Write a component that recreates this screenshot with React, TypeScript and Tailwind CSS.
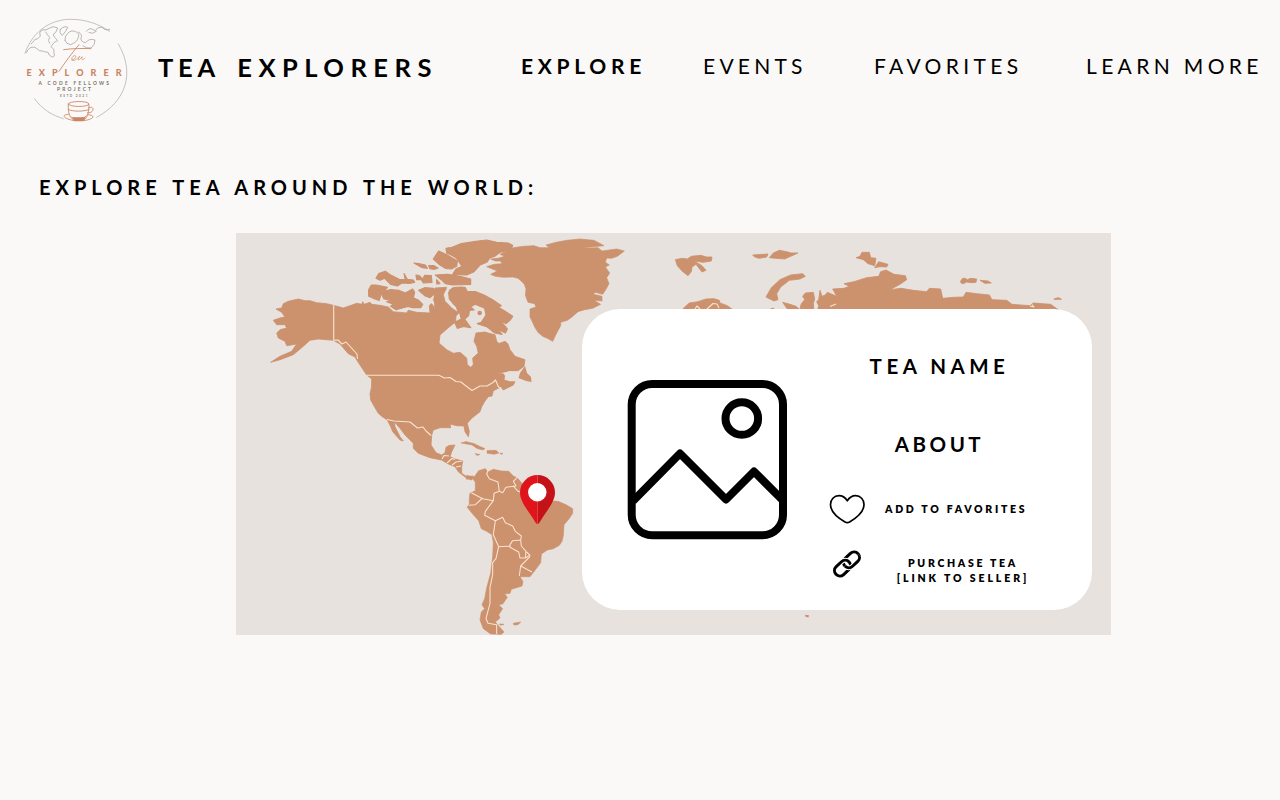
import type { ReactNode } from 'react';

const LAND = '#cc916d';
const BORDER = '#fae3d0';

function Logo() {
  return (
    <svg viewBox="15 10 125 120" className="h-[120px] w-[125px]" fill="none">
      <g transform="translate(15 10) scale(.33333)" strokeLinecap="round" strokeLinejoin="round">
        <g stroke="#aaa49e" strokeWidth="2">
          <path d="M30 130C55 55 118 27 168 28C215 28 255 44 284 64" />
          <path d="M310 102C362 190 332 275 245 322M58 266C82 298 110 315 145 326" />
          <path
            d="M34 128Q42 108 60 112Q74 126 86 124Q92 128 98 126Q102 138 112 141Q120 142 117 128Q120 116 108 110Q116 94 128 92Q118 82 114 74Q126 66 128 54Q114 46 104 54Q94 62 80 60Q70 68 76 78Q68 90 60 88Q54 98 48 102M92 66Q98 76 104 82Q96 92 104 100M136 58Q148 46 158 52Q152 66 142 76Q132 70 136 58M150 92Q148 80 158 70Q170 58 184 66Q196 72 190 82Q186 98 166 104Q154 102 150 92M190 66Q204 74 198 84Q196 96 212 98Q222 84 240 90Q240 106 228 114Q214 116 204 108M214 64Q224 50 236 60Q240 66 248 54Q262 48 268 58Q276 62 284 58M222 68Q232 74 244 64"
            strokeWidth="2.4"
          />
        </g>
        <g stroke="#c98462" strokeWidth="2.6">
          <path d="M146 119C170 115 206 115 228 116M192 104C170 130 148 160 132 184" />
          <path d="M170 150C180 150 188 136 178 137C169 140 167 154 178 151C186 148 194 137 195 139C188 146 188 154 194 148L202 140C198 150 202 152 210 144" strokeWidth="2" />
          <path d="M160 282C160 272 220 272 222 282C220 292 162 292 160 282ZM160 284C158 310 166 327 178 330H206C218 324 222 304 222 284M222 293C242 286 236 312 218 308M160 299C176 305 204 305 222 299M160 313C138 314 144 326 178 332H206C236 328 244 316 220 314M170 322C184 330 204 328 214 318" />
          <path d="M174 323H210L204 332H180Z" fill="#c98462" />
        </g>
      </g>
      <g fontFamily="Lato, sans-serif">
        <text x="26.5" y="76" fontSize="9" fontWeight="900" fill="#c98462" textLength="95">EXPLORER</text>
        <text x="38.5" y="84.8" fontSize="4.8" fontWeight="700" fill="#77716c" textLength="70.5">A CODE FELLOWS</text>
        <text x="57" y="91.4" fontSize="4.8" fontWeight="700" fill="#77716c" textLength="34">PROJECT</text>
        <text x="60" y="97.4" fontSize="3.2" fontWeight="700" fill="#8c8580" textLength="27.5">ESTD 2021</text>
      </g>
    </svg>
  );
}

function WorldMap() {
  return (
    <svg viewBox="236 233 875 402" className="block h-[402px] w-[875px] bg-[#e7e2de]" fill={LAND}>
      {/* North and Central America */}
      <path
        stroke={LAND}
        strokeWidth=".8"
        strokeLinejoin="round"
        d="M276 309L281.700 308L283.300 303.700L288.300 301.300L298.300 299L305 300.700H310L316.700 302.700L326.700 303.700L333.300 305.300L343.300 308L350 305.700L356.700 303.300L361.700 304.300L362.700 301.700L364.300 304.300L370 302.300L371.700 304.300L380 305.300L388.300 307L393.300 311.700L406.700 313L408.300 310.300L416.700 312.300L430 313L429.300 305.700L431.300 303.500L433.300 305.700L436 312.300L439 310.300L433.300 299.700L436 294L435 288L446.700 287.300L443.300 294.700L445 301.300L451.700 308L457.700 312.300L456 305L459 306L463 302.500L461 299.500L451 293L449 290.500L453 287.600L458 290.500L460 296L474.500 310L460 311.700L456 316L455.500 322L448 328L440 335L439 343L446.700 349.700L453.300 353.300L460 352.300L466.700 358L467.300 364.700L470.700 367.300L473.300 364.700L472.700 358L478.300 353L476.700 346.300L474 341.300L476 333L485 332L488 333L495 334.700L496.700 341.300L499 343.500L505 341.300L508 344L510 349.700L515 356.300L525 359.700L524 366.300L518.300 370.700L503.300 372.300L496.700 373.300L505 374L504 380L510 381.700L515 381.700L513.300 385L503.300 390L501 387L493.300 390.700L492 396L488.300 396.700L485 401L481.700 406.700L480 411.700L471.700 418.300L467.300 423.300L469.300 431.700L468.300 436.700L465 431.700L464 426L456.700 425.700L450 424L450.700 427.700L440 427.700L433.300 430L431.700 435L431 445L436 452.700L441.700 455L445 452.700L446 447.300L449 445.500L455 445L451.700 451.700L450 456.700L455 459L462.700 461L461.700 466.700V473.300L466.700 476.700L473.300 476L471.700 480L466.700 478.300L458.300 471.700L455 466.700L448.300 464L441.700 460L430 457.700L418.300 453.300L413.300 448.300V443.300L405 435L400 428.300L394.300 421.700L395 426.700L400 436.700L403.300 441L400 440L392.700 431.700L390.700 426.700L387.300 420L382 416.500L378.300 413.300L374 406L370.700 400L370 394L371.500 387L371.700 379L366.700 375L363.300 370L356.700 360L355 357L348.300 353.700L340 344L333.300 340.300L318.300 339L310 340.300L303.300 346.300L293.300 354.700L280 359.700L270.700 362.300L280 356.300L291.700 351.300L296.700 344L286.700 345.700L285 341.300L278.300 338L276.700 333L280 329.700L286.700 328L285 324.700H276.700L273.300 320.300L280 318L285 317L281.700 312.300Z"
      />
      <path fill="#e7e2de" d="M503 373L510 371L518 371.500L522 369L520 374L516 379L507 378Z" />
      {/* Newfoundland, Cuba, Hispaniola, Jamaica, Puerto Rico */}
      <path d="M525 366L527 373L531 377L531.500 382L526 381L518.500 378L520 373Z" />
      <path
        stroke={LAND}
        strokeWidth=".5"
        d="M461 443L466 441.600L474 443.500L480 446.500L485 448.500L483 450L477 448.500L472 445ZM487 450.500L496 450.300L499 453L494 454.300L487 453.300ZM475 453.500L480 454.500L477 455.500ZM500 453L503 453.500L501 454.500Z"
      />
      {/* Arctic islands */}
      <g transform="translate(360 235) scale(.33333)" stroke={LAND} strokeWidth="3.500" strokeLinejoin="round">
        <path d="M48 130L56 116L76 109L88 118L104 126L120 134L136 134L132 116L142 133L160 135L164 142L148 145L126 144L112 153L92 148L74 130L60 136Z" />
        <path d="M26 164L34 150L48 150L68 154L82 157L72 170L62 180L58 196L40 190L26 184Z" />
        <path d="M66 180L74 168L92 164L116 166L136 174L158 162L164 172L160 188L176 196L188 208L182 218L158 218L144 214L130 218L108 224L92 214L100 208L80 200L98 196L72 192Z" />
        <path d="M162 84L176 86L196 90L202 100L184 97ZM206 92L222 92L234 99L224 103L210 101ZM168 120L178 122L188 132L194 121L214 122L216 142L190 144L184 134L170 134ZM226 120L262 118L300 124L332 132L332 148L278 150L256 146L244 134ZM230 134L240 146L230 147Z" />
        <path d="M220 72L236 48L262 60L292 78L290 94L274 102L256 100L240 90Z" />
        <path d="M258 40L276 37L304 26L348 19L380 15L410 22L444 24L458 31L454 42L420 52L404 64L390 68L380 82L360 90L342 110L320 120L278 118L288 102L306 94L298 82L290 70L278 62L260 54Z" />
        <path d="M176 166L194 158L220 160L224 176L210 188L194 182Z" />
        <path d="M266 172L282 158L304 156L316 158L322 170L346 170L372 180L398 194L424 212L414 216L434 228L458 244L450 256L438 266L420 256L442 282L436 294L414 282L426 298L404 294L382 276L352 266L364 262L378 240L374 220L346 208L330 216L326 242L314 252L332 278L310 274L292 280L284 262L304 252L296 222L278 204L268 192Z" />
        <path d="M354 234A5 5 0 1 0 364 234A5 5 0 1 0 354 234Z" />
        <path d="M222 162H258L240 184L240 206L264 224L288 234L284 250L252 238L226 240Z" />
      </g>
      {/* Greenland */}
      <g transform="translate(440 233) scale(.33333)" stroke={LAND} strokeWidth="2" strokeLinejoin="round">
        <path d="M140 101L162 94L186 92L182 84L166 84L152 78L174 76L194 70L180 64L204 52L220 44L250 40L282 38L300 44L328 44L318 36L348 28L380 22L420 18L462 22L492 38L450 42L422 46L474 44L486 54L530 48L553 54L532 70L515 76L500 75L496 88L508 96L496 102L509 120L500 134L507 152L496 172L488 184L466 178L460 184L486 190L486 204L462 202L482 214L458 226L434 230L414 236L396 252L382 262L362 268L362 278L350 300L338 325L322 316L308 310L294 298L284 282L276 264L270 252L270 228L288 222L284 212L264 208L258 192L278 192L286 196L256 190L258 168L253 154L246 146L234 136L218 132L190 133L166 130L152 124L172 114Z" />
      </g>
      {/* South America */}
      <g transform="translate(430 460) scale(.33333)" stroke={LAND} strokeWidth="2" strokeLinejoin="round">
        <path d="M110 46L132 52L146 32L166 26L174 36L190 28L214 33L236 34L250 48L262 54L276 70L300 110L350 122L384 124L408 134L428 146L428 160L416 178L402 194L400 226L396 244L388 256L370 266L352 270L334 282L332 308L314 332L300 350L270 350L279 365L276 378L244 388L240 400L224 402L232 412L218 432L206 434L218 446L206 464L210 474L196 486L206 498L222 516L214 523L182 522L160 506L150 480L154 456L164 446L156 434L164 416L170 384L182 340L188 290L190 248L186 224L170 214L154 206L146 182L128 162L112 142L118 132L118 116L120 100L136 92L136 66L126 54L110 58Z" />
        <path d="M250 490L260 488L272 486L264 494L252 495ZM208 492L222 493L212 496Z" />
      </g>
      {/* Svalbard, Russia and the Arctic coast */}
      <g transform="translate(660 233) scale(.33333)" stroke={LAND} strokeWidth="2.500" strokeLinejoin="round">
        <path d="M46 80L66 76L82 78L94 70L122 67L140 72L156 72L154 84L130 88L102 84L126 98L138 112L126 117L108 94L96 102L94 116L84 128L66 114L52 98ZM278 66L324 63L320 72L298 76L284 72ZM328 74L340 60L358 52L380 56L394 60L414 60L396 68L374 78L346 76ZM588 74L600 70L606 58L628 58L632 74L648 76L644 98L624 92L610 80ZM644 104L656 86L684 94L680 102L660 101Z" />
        <path d="M318 192L334 164L360 140L392 126L428 122L436 130L420 138L388 142L362 162L350 182L354 200L342 204ZM70 226L88 210L114 206L138 198L162 197L178 202L180 210L202 218L224 234H70ZM332 228L340 225L342 228ZM368 208L390 214L408 220L424 234H386ZM420 226L424 212L434 200L428 190L436 180L460 178L464 198L460 212L462 234H430Z" />
        <path d="M472 234L476 218L470 206L476 200L480 172L486 190L496 186L502 178L530 190L518 168L552 166L568 160L552 152L582 146L620 134L656 130L662 116L678 111L702 124L736 128L740 140L720 154L690 170L724 166L760 172L800 176L808 166L842 168L848 196L880 193L910 192L918 178L950 182L988 186L996 200L1040 202L1056 214L1110 218L1120 210L1172 214L1200 234Z" />
        <path d="M902 144L908 136L916 136L922 140L932 136L950 138L948 148L934 149L920 147L910 152L903 150ZM960 142L984 144L994 150L974 151ZM1182 198L1194 194L1204 198V199H1182Z" />
      </g>
      <path d="M805 614.800L809 615.200L808.500 617.600L805.500 616.800Z" />

      {/* National borders */}
      <g fill="none" stroke={BORDER} strokeWidth="1.100" strokeLinejoin="round">
        <path d="M333.700 305V340.300L338 340L342 344L346 342L357 354L357.500 359" />
        <path d="M366.500 375.300H439L444.500 378L450 377.500L456 381.500L461 382L466 386L472 390.500L480 386L487 386L493 382.500L495.500 380L498.500 387L501 388" />
        <path d="M387 419.500L394 421L410 422L417.500 428L423 427L426 431L431 435.500" />
        <path d="M442 459L444 455.500L449 456M447 463L452 458.500L455 459.500M452 465L456 462L462 461M456 467L461 466" />
        <g transform="translate(430 460) scale(.33333)" strokeWidth="3.200">
          <path d="M174 32L170 42L178 56L204 66L208 94L218 98L228 82L258 78L250 64L262 52M250 78L262 92L276 98M208 94L192 100L190 122L166 154L164 166L196 182L218 172L226 188L248 198L256 214L274 228L272 240L248 242L240 254L240 262L266 276L270 294L286 294L288 274L274 258L272 240M286 294L300 286L290 276M124 98L158 116L190 122M116 136L136 134L158 114M196 182L190 224L206 260L240 258M206 260L198 296L188 308L188 344L180 382L180 430L168 476L174 490L200 494V522M300 290L272 318L306 336M272 318L268 348" />
        </g>
        <path d="M695 309L697 306L700 309M707 309L713 303.500L717 304L719 308" />
        <path d="M830 306.500L836 304M1030 306L1034 307L1032 304.500" />
      </g>
    </svg>
  );
}

function MapPin() {
  return (
    <svg viewBox="519 474 37 51" className="absolute top-[241px] left-[283px] h-[51px] w-[37px]">
      <path d="M537.500 475A17.500 17.500 0 0 0 520 492.500C520 503 531 514 535.500 522.500Q536.500 524 537.500 524Z" fill="#e0151b" />
      <path d="M537.500 475A17.500 17.500 0 0 1 555 492.500C555 503 544 514 539.500 522.500Q538.500 524 537.500 524Z" fill="#c41218" />
      <path d="M537.500 475V524" stroke="#e8484a" strokeWidth=".6" />
      <circle cx="537.300" cy="492.300" r="9.200" fill="#fff" />
    </svg>
  );
}

function PictureIcon() {
  return (
    <svg viewBox="627 379 161 161" className="h-[161px] w-[161px]" fill="none" stroke="#000" strokeWidth="8">
      <rect x="631.700" y="384" width="151.300" height="151.300" rx="20.500" />
      <circle cx="741.800" cy="418.500" r="16.300" />
      <path d="M633 501L680 453.500L726 499.500L754 471.500L783 500.500" strokeLinejoin="round" />
    </svg>
  );
}

function HeartIcon() {
  return (
    <svg viewBox="829 494 37 30" className="h-[30px] w-[37px]" fill="none" stroke="#000" strokeWidth="1.700" strokeLinejoin="round">
      <path d="M847.300 500.800C844.500 496.500 841.500 495.700 839 495.700C834 495.700 830.500 499.500 830.500 504.500C830.500 512.500 839 518.500 845 521.900Q847.300 523.200 849.600 521.900C855.500 518.500 864 512.500 864 504.500C864 499.500 860.500 495.700 855.600 495.700C853 495.700 850 496.500 847.300 500.800Z" />
    </svg>
  );
}

function LinkIcon() {
  return (
    <svg viewBox="-15 -15 30 30" className="h-[30px] w-[30px]" fill="none">
      <defs>
        <clipPath id="link-half">
          <rect x="-15" y="0" width="30" height="15" />
        </clipPath>
      </defs>
      <g transform="rotate(-43)">
        <rect x="-2.900" y="-5.400" width="18" height="10.800" rx="5.400" stroke="#000" strokeWidth="3" />
        <rect x="-15.100" y="-5.400" width="18" height="10.800" rx="5.400" stroke="#fff" strokeWidth="5" />
        <rect x="-15.100" y="-5.400" width="18" height="10.800" rx="5.400" stroke="#000" strokeWidth="3" />
        <g clipPath="url(#link-half)">
          <rect x="-2.900" y="-5.400" width="18" height="10.800" rx="5.400" stroke="#fff" strokeWidth="5" />
          <rect x="-2.900" y="-5.400" width="18" height="10.800" rx="5.400" stroke="#000" strokeWidth="3" />
        </g>
      </g>
    </svg>
  );
}

function NavLink({ className, children }: { className: string; children: ReactNode }) {
  return (
    <a href="#" className={`text-[21px] leading-6 whitespace-nowrap ${className}`}>
      {children}
    </a>
  );
}

export default function App() {
  return (
    <div className="min-h-[800px] w-[1280px] overflow-hidden bg-[#faf9f7] font-['Lato',sans-serif] text-black">
      <header className="flex h-[140px] items-start pt-[10px] pl-[15px]">
        <Logo />
        <div className="mt-[41px] ml-[18px] w-[363px] text-[25.5px] leading-8 font-bold tracking-[4.8px] whitespace-nowrap">
          TEA <span className="ml-[7px] tracking-[6.5px]">EXPLORERS</span>
        </div>
        <nav className="mt-[44px] flex">
          <NavLink className="w-[182px] font-bold tracking-[4.7px]">EXPLORE</NavLink>
          <NavLink className="w-[171px] tracking-[4.25px]">EVENTS</NavLink>
          <NavLink className="w-[212px] tracking-[4.35px]">FAVORITES</NavLink>
          <NavLink className="tracking-[4.35px]">LEARN MORE</NavLink>
        </nav>
      </header>
      <main>
        <h1 className="mt-[35px] ml-[39px] text-[20px] leading-6 font-bold tracking-[5px] [word-spacing:1.2px] whitespace-nowrap">EXPLORE TEA AROUND THE WORLD:</h1>
        <section className="relative mt-[34px] ml-[236px] w-[875px]">
          <WorldMap />
          <MapPin />
          <article className="absolute top-[76px] left-[346px] flex h-[301px] w-[510px] rounded-[38px] bg-white pl-[45px]">
            <div className="pt-[70px]">
              <PictureIcon />
            </div>
            <div className="ml-[41px] w-[221px] pt-[45px]">
              <h2 className="text-center text-[20.5px] leading-6 font-bold tracking-[4.5px] whitespace-nowrap">TEA NAME</h2>
              <h2 className="mt-[54px] text-center text-[20.5px] leading-6 font-bold tracking-[3.5px]">ABOUT</h2>
              <button className="mt-[38px] flex h-[30px] w-full items-center">
                <HeartIcon />
                <span className="ml-[19px] text-[10.5px] leading-[15px] font-extrabold tracking-[2.7px] whitespace-nowrap">ADD TO FAVORITES</span>
              </button>
              <a href="#" className="mt-[25px] flex h-[30px] w-full items-center">
                <span className="ml-[3px]">
                  <LinkIcon />
                </span>
                <span className="mt-[13px] ml-[23px] w-[156px] text-center text-[10.5px] leading-[15px] font-extrabold tracking-[2.7px] whitespace-nowrap">
                  PURCHASE TEA
                  <br />
                  <span className="tracking-[2.9px]">[LINK TO SELLER]</span>
                </span>
              </a>
            </div>
          </article>
        </section>
      </main>
    </div>
  );
}
